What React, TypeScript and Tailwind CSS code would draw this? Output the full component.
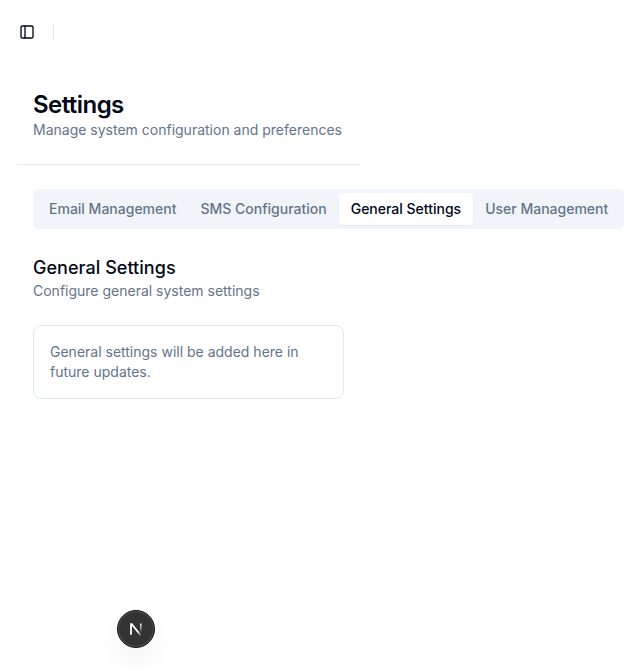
import React from "react";
import { PanelLeft } from "lucide-react";

const tabs = ["Email Management", "SMS Configuration", "General Settings", "User Management"];
const active = "General Settings";

function NextBadge() {
  return (
    <div className="absolute left-[117px] top-[610px] flex size-[38px] items-center justify-center rounded-full border border-[#151515] bg-[#333333] shadow-[inset_0_0_0_1px_#505050,0_16px_32px_-8px_rgba(0,0,0,0.14)]">
      <svg width="14" height="14" viewBox="0 0 14 14" fill="none">
        <defs>
          <linearGradient id="diag" x1="4" y1="4" x2="12" y2="13" gradientUnits="userSpaceOnUse">
            <stop offset="0.6" stopColor="white" />
            <stop offset="1" stopColor="white" stopOpacity="0.2" />
          </linearGradient>
          <linearGradient id="stem" x1="11.5" y1="1" x2="11.5" y2="11" gradientUnits="userSpaceOnUse">
            <stop stopColor="white" />
            <stop offset="1" stopColor="white" stopOpacity="0" />
          </linearGradient>
        </defs>
        <path d="M2 12.8V2.2H2.8L11.8 13.5" stroke="url(#diag)" strokeWidth="1.8" />
        <path d="M11.8 1.4V11" stroke="url(#stem)" strokeWidth="1.6" />
      </svg>
    </div>
  );
}

export default function App() {
  return (
    <div className="relative h-[667px] w-full overflow-hidden bg-white font-['Inter',sans-serif] text-[#020817] antialiased">
      <header className="flex h-16 items-center gap-[11px] px-[13px]">
        <button className="flex size-7 items-center justify-center rounded-md">
          <PanelLeft size={16} strokeWidth={2} />
        </button>
        <div className="ml-px h-4 w-px bg-[#e2e8f0]" />
      </header>
      <main className="ml-[17px] w-[343px]">
        <div className="h-[101px] border-b border-[#e2e8f0] px-4 pt-[25px]">
          <h1 className="text-2xl leading-[31px] font-semibold tracking-[-0.023em]">Settings</h1>
          <p className="text-sm text-[#64748b]">Manage system configuration and preferences</p>
        </div>
        <div className="px-4 pt-6">
          <div className="flex h-10 w-[591px] items-center rounded-md bg-[#f1f5f9] p-1">
            {tabs.map((tab) => (
              <button
                key={tab}
                className={
                  tab === active
                    ? "h-8 rounded-sm bg-white px-3 text-sm font-medium whitespace-nowrap shadow-xs"
                    : "h-8 px-3 text-sm font-medium whitespace-nowrap text-[#64748b]"
                }
              >
                {tab}
              </button>
            ))}
          </div>
          <h2 className="mt-[25px] text-lg leading-[27px] font-medium tracking-[0.002em]">General Settings</h2>
          <p className="text-sm text-[#64748b]">Configure general system settings</p>
          <div className="mt-6 rounded-lg border border-[#e2e8f0] p-4 text-sm text-[#64748b]">
            General settings will be added here in future updates.
          </div>
        </div>
      </main>
      <NextBadge />
    </div>
  );
}
